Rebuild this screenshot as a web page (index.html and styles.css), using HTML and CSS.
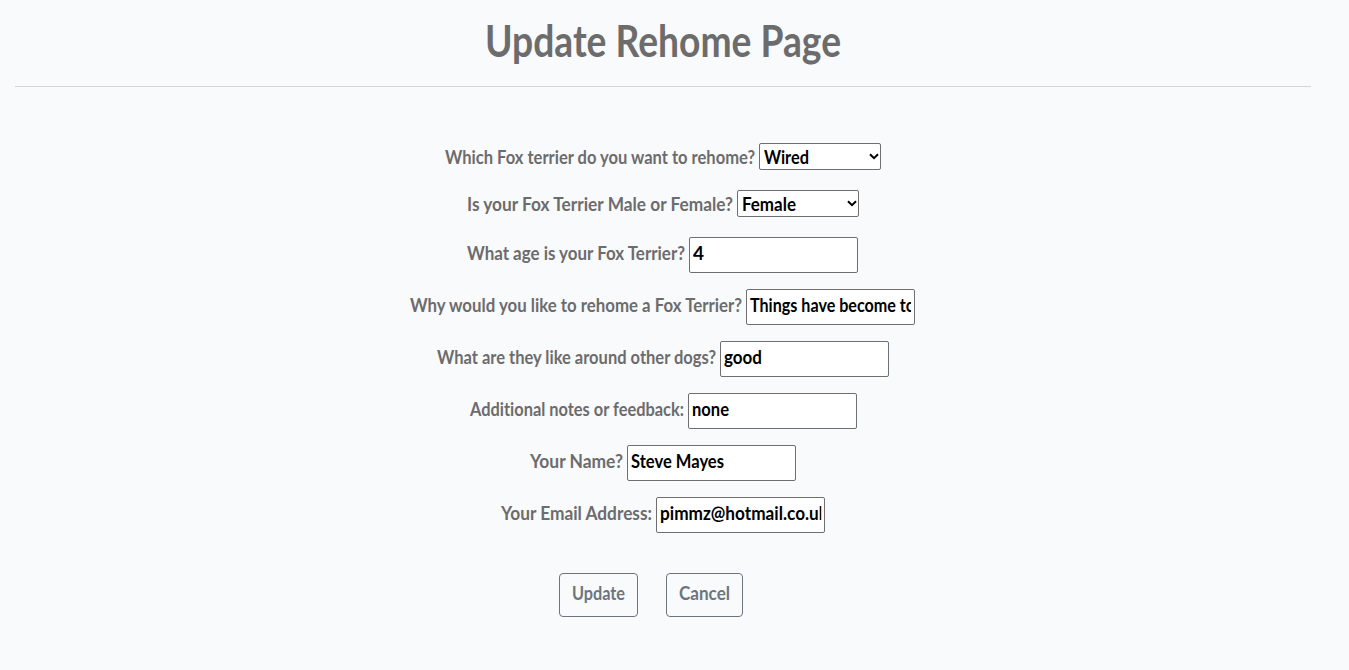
FILE: index.html
```html
<!DOCTYPE html>
<html lang="en">
<head>
<meta charset="utf-8">
<title>Update Rehome Page</title>
<link rel="stylesheet" href="styles.css">
</head>
<body>
<main class="page">
  <h1 class="title"><span class="fit" data-width="356">Update Rehome Page</span></h1>
  <hr class="rule">
  <form class="form">
    <div class="row row-select">
      <label class="fit" for="coat" data-width="310">Which Fox terrier do you want to rehome?</label>
      <span class="field field-select"><select id="coat" class="control" data-width="45"><option>Wired</option><option>Smooth</option></select><svg class="arrow" viewBox="0 0 10 7"><path d="M1 1.2 5 5.2 9 1.2"/></svg></span>
    </div>
    <div class="row row-select">
      <label class="fit" for="sex" data-width="266">Is your Fox Terrier Male or Female?</label>
      <span class="field field-select"><select id="sex" class="control" data-width="54"><option>Female</option><option>Male</option></select><svg class="arrow" viewBox="0 0 10 7"><path d="M1 1.2 5 5.2 9 1.2"/></svg></span>
    </div>
    <div class="row row-nudge">
      <label class="fit" for="age" data-width="218">What age is your Fox Terrier?</label>
      <span class="field"><input id="age" class="control" data-width="11" value="4"></span>
    </div>
    <div class="row row-nudge">
      <label class="fit" for="why" data-width="332">Why would you like to rehome a Fox Terrier?</label>
      <span class="field"><input id="why" class="control" data-width="165" value="Things have become to"></span>
    </div>
    <div class="row">
      <label class="fit" for="dogs" data-width="279">What are they like around other dogs?</label>
      <span class="field"><input id="dogs" class="control" data-width="38" value="good"></span>
    </div>
    <div class="row">
      <label class="fit" for="notes" data-width="214">Additional notes or feedback:</label>
      <span class="field"><input id="notes" class="control" data-width="37" value="none"></span>
    </div>
    <div class="row">
      <label class="fit" for="name" data-width="93">Your Name?</label>
      <span class="field"><input id="name" class="control" data-width="93" value="Steve Mayes"></span>
    </div>
    <div class="row">
      <label class="fit" for="email" data-width="151">Your Email Address:</label>
      <span class="field"><input id="email" class="control" data-width="168" value="pimmz@hotmail.co.uk"></span>
    </div>
    <div class="actions">
      <button class="btn" type="button"><span class="fit" data-width="53">Update</span></button>
      <button class="btn" type="button"><span class="fit" data-width="51">Cancel</span></button>
    </div>
  </form>
</main>
<script src="fit.js"></script>
</body>
</html>
```
FILE: styles.css
```css
* { box-sizing: border-box; }
body {
  margin: 0;
  background: #f9fafc;
  color: #6c6c6c;
  font: 700 18px/24px Lato, "Open Sans", sans-serif;
  font-variant-ligatures: none;
  overflow: hidden;
}
.page { padding: 0 38px 0 15px; }
.title {
  display: flex;
  justify-content: center;
  height: 86px;
  margin: 0;
  padding-top: 14px;
  font-size: 43px;
  line-height: 54px;
  font-weight: 700;
}
.rule { height: 1px; margin: 0; border: 0; background: #d4d5d7; }
.fit { display: block; white-space: nowrap; transform-origin: 0 50%; }
.form { padding-top: 56px; }
.row {
  display: flex;
  justify-content: center;
  gap: 4px;
  height: 36px;
  margin-bottom: 16px;
}
.row .fit { margin-top: 4px; }
.row-nudge { padding-right: 1px; }
.row-select { height: 27px; margin-bottom: 20px; }
.row-select .fit { margin-top: 2px; }
.field {
  display: block;
  width: 169px;
  height: 36px;
  padding: 1px 3px;
  border: 1px solid #6f6f6f;
  border-radius: 2px;
  background: #fff;
  overflow: hidden;
}
.field-select { position: relative; width: 122px; height: 27px; padding-top: 0; }
.control {
  display: block;
  width: 161px;
  height: 28px;
  margin: 0;
  padding: 0;
  border: 0;
  outline: 0;
  background: transparent;
  color: #000;
  font: inherit;
  transform-origin: 0 50%;
}
.field-select .control { width: 100px; height: 25px; padding-left: 1px; appearance: none; }
.arrow {
  position: absolute;
  right: 1px;
  top: 9px;
  width: 10px;
  height: 7px;
  fill: none;
  stroke: #000;
  stroke-width: 2;
}
.actions { display: flex; gap: 28px; padding: 24px 0 0 544px; }
.btn {
  height: 44px;
  padding: 0 12px 4px;
  border: 1px solid #6c757d;
  border-radius: 4px;
  background: transparent;
  color: #6c757d;
  font: inherit;
}
```
FILE: fit.js
```js
// Condense labels and field text horizontally to their set widths.
document.querySelectorAll(".fit").forEach(function (el) {
  var range = document.createRange();
  range.selectNodeContents(el);
  var natural = range.getBoundingClientRect().width;
  var width = Number(el.dataset.width);
  el.style.width = width + "px";
  el.style.transform = "scaleX(" + width / natural + ")";
});
var ctx = document.createElement("canvas").getContext("2d");
document.querySelectorAll(".control").forEach(function (el) {
  ctx.font = '700 18px Lato, "Open Sans", sans-serif';
  var scale = Number(el.dataset.width) / ctx.measureText(el.value).width;
  el.style.width = el.clientWidth / scale + "px";
  el.style.transform = "scaleX(" + scale + ")";
});
```
